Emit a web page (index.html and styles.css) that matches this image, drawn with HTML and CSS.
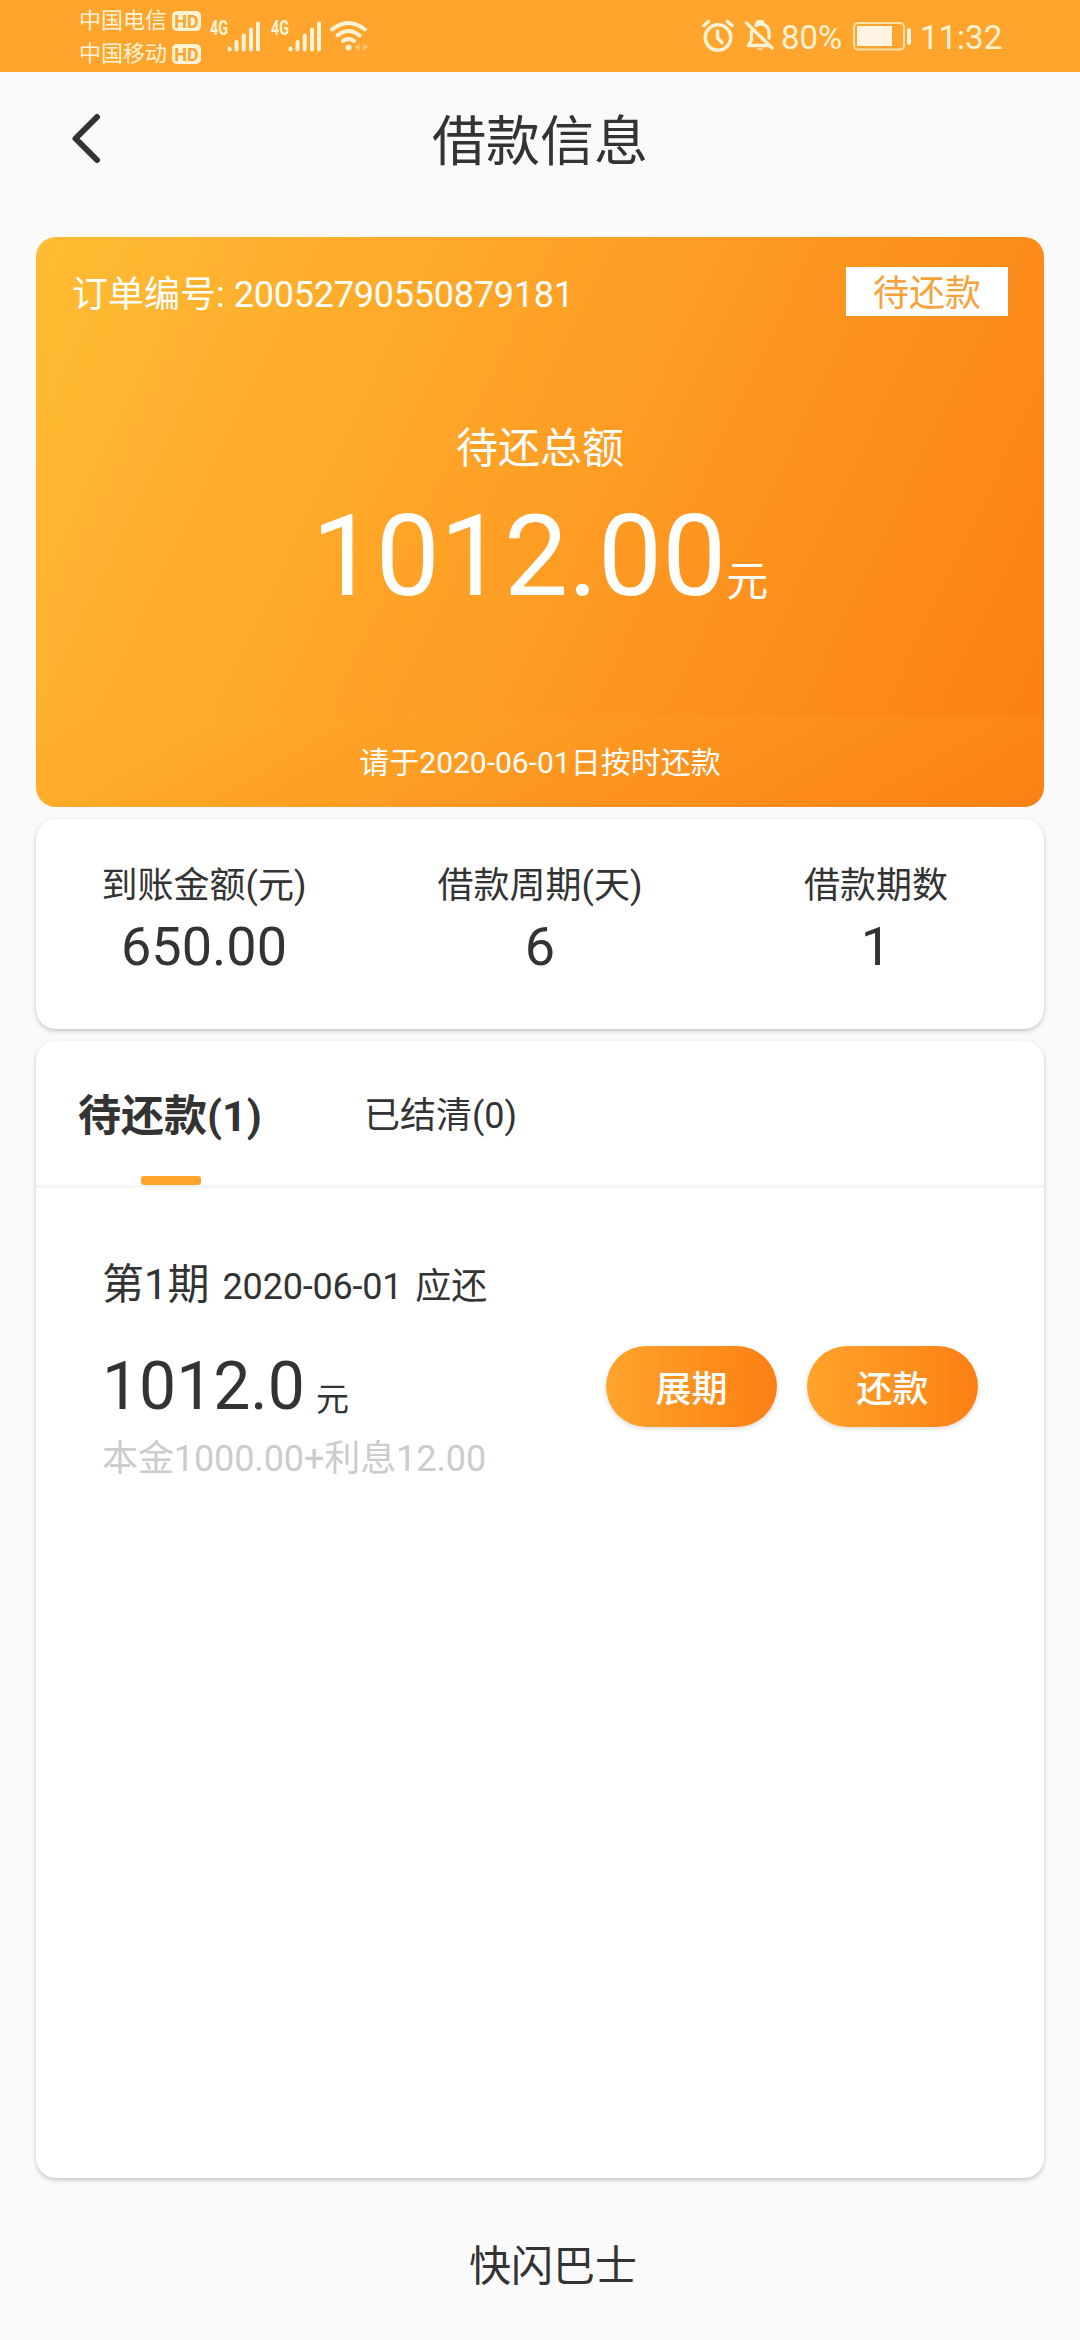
FILE: index.html
```html
<!DOCTYPE html>
<html lang="zh-CN">
<head>
<meta charset="utf-8">
<title>借款信息</title>
<link rel="stylesheet" href="styles.css">
</head>
<body>
<header class="status">
  <div class="carriers">
    <div class="carrier"><span>中国电信</span><b class="hd">HD</b></div>
    <div class="carrier"><span>中国移动</span><b class="hd">HD</b></div>
  </div>
  <svg class="signal" width="50" height="32" viewBox="0 0 50 32">
    <text x="0" y="15" class="net" textLength="18" lengthAdjust="spacingAndGlyphs">4G</text>
    <path d="M19.500 29.500V28.500M26.500 29.500V22M33.700 29.500V15.500M41 29.500V9.500M48 29.500V3.500"/>
  </svg>
  <svg class="signal second" width="50" height="32" viewBox="0 0 50 32">
    <text x="0" y="15" class="net" textLength="18" lengthAdjust="spacingAndGlyphs">4G</text>
    <path d="M19.500 29.500V28.500M26.500 29.500V22M33.700 29.500V15.500M41 29.500V9.500M48 29.500V3.500"/>
  </svg>
  <svg class="wifi" width="38" height="32" viewBox="0 0 38 32">
    <path d="M2 9.500Q18.500-3.500 35 9.500M7.500 15.500Q18.500 6.500 29.500 15.500M13 21Q18.500 17 24 21"/>
    <circle cx="18.500" cy="27.500" r="3"/>
    <path class="faint" d="M24.500 27l5-4v8zM38 27l-5-4v8z"/>
  </svg>
  <svg class="alarm" width="32" height="32" viewBox="0 0 32 32">
    <circle cx="16" cy="17.500" r="12.700"/>
    <path d="M2 5.500 6.500 1.500M30 5.500 25.500 1.500M15.500 11V18L20 22.500"/>
  </svg>
  <svg class="bell" width="30" height="32" viewBox="0 0 30 32">
    <path d="M1.500 3 27 28M12 3.500C12 .8 18 .8 18 3.500M11 5.500C18.500 1.500 24 6.500 24 13V18M6.500 11.500V20L3.500 25.500H22"/>
    <path class="solid" d="M11.500 28.500h7q-3.500 3.500-7 0z"/>
  </svg>
  <span class="percent">80%</span>
  <svg class="battery" width="59" height="29" viewBox="0 0 59 29">
    <rect class="shell" x="1" y="1" width="50" height="26.500" rx="4"/>
    <rect class="level" x="4" y="4" width="35" height="20"/>
    <rect class="level" x="54" y="6" width="4" height="17" rx="2"/>
  </svg>
  <span class="clock">11:32</span>
</header>

<nav class="titlebar">
  <svg class="back" width="30" height="50" viewBox="0 0 30 50"><path d="M25 4 3.500 25.500 25 47"/></svg>
  <h1>借款信息</h1>
</nav>

<main>
  <section class="summary">
    <div class="total">
      <div class="order"><span>订单编号: <span class="number">20052790550879181</span></span><span class="tag">待还款</span></div>
      <div class="caption">待还总额</div>
      <div class="amount">1012.00<small>元</small></div>
    </div>
    <div class="hint">请于2020-06-01日按时还款</div>
  </section>

  <section class="card stats">
    <div><p>到账金额(元)</p><strong>650.00</strong></div>
    <div><p>借款周期(天)</p><strong>6</strong></div>
    <div><p>借款期数</p><strong>1</strong></div>
  </section>

  <section class="card plan">
    <div class="tabs">
      <div class="tab active">待还款(1)</div>
      <div class="tab">已结清(0)</div>
    </div>
    <div class="item">
      <div class="term"><span>第1期</span><span class="date number">2020-06-01</span><span class="date">应还</span></div>
      <div class="due">
        <div class="money">1012.0<small>元</small></div>
        <button>展期</button>
        <button>还款</button>
      </div>
      <div class="detail">本金1000.00+利息12.00</div>
    </div>
  </section>
</main>
<footer>快闪巴士</footer>
</body>
</html>
```
FILE: styles.css
```css
* { box-sizing: border-box; margin: 0; padding: 0; }
body {
  display: flex;
  flex-direction: column;
  width: 1080px;
  height: 2340px;
  background: #fafafa;
  color: #333;
  font-family: Roboto, "Noto Sans CJK SC", sans-serif;
  overflow: hidden;
}
svg { display: block; flex: none; overflow: visible; }
.number { letter-spacing: -.22px; }

.status {
  display: flex;
  height: 72px;
  padding-left: 79px;
  background: #ffa42c;
  color: #fff3d6;
}
.status svg { fill: none; stroke: #fff3d6; stroke-linecap: round; stroke-linejoin: round; }
.carriers { padding-top: 4px; width: 131px; }
.carrier { display: flex; align-items: center; gap: 5px; height: 33px; font-size: 22px; line-height: 33px; white-space: nowrap; }
.hd {
  width: 29px;
  height: 20px;
  border-radius: 5px;
  background: #fff3d6;
  color: #ffa42c;
  font-size: 18px;
  line-height: 21px;
  text-align: center;
}
.signal { margin-top: 20px; stroke-width: 4px; }
.signal.second { margin-left: 11px; }
.status .net { fill: #fff3d6; stroke: none; font-size: 20px; font-weight: 700; }
.wifi { margin: 20px 0 0 9px; stroke-width: 4px; }
.status .wifi circle { fill: #fff3d6; stroke: none; }
.status .wifi .faint { fill: #ffc472; stroke: none; }
.alarm { margin: 20px 0 0 334px; stroke-width: 3.6px; }
.bell { margin: 20px 0 0 11px; stroke-width: 3.4px; }
.status .bell .solid { fill: #fff3d6; stroke: none; }
.percent { margin-left: 6px; width: 72px; font-size: 33px; line-height: 76px; }
.battery { margin-top: 22px; }
.status .battery .level { fill: #fff3e4; stroke: none; }
.status .battery .shell { fill: none; stroke: #ffe0a8; stroke-width: 2px; }
.clock { margin-left: 8px; font-size: 33px; line-height: 76px; }

.titlebar { display: grid; grid-template-columns: 72px 1fr 72px; height: 165px; padding-top: 35px; }
.back { margin: 6px 0 0 72px; fill: none; stroke: #333; stroke-width: 6px; stroke-linecap: round; stroke-linejoin: round; }
h1 { font-size: 54px; font-weight: 400; line-height: 72px; text-align: center; }

main { padding: 0 36px; }
.summary { height: 570px; border-radius: 20px; overflow: hidden; color: #fff; }
.total { height: 480px; padding-top: 30px; background: linear-gradient(115.5deg, #ffbc33, #fe9f25 50%, #fb8014); }
.order { display: flex; justify-content: space-between; padding: 0 36px; height: 49px; font-size: 36px; line-height: 56px; }
.tag { width: 162px; height: 49px; background: #fff; color: #f5a338; line-height: 55px; text-align: center; }
.caption { padding-top: 103px; font-size: 42px; line-height: 60px; text-align: center; }
.amount { font-size: 114px; line-height: 136px; text-align: center; margin-top: 9px; }
.amount small { position: relative; top: 1px; font-size: 42px; }
.hint { height: 90px; background: linear-gradient(150deg, #ffb12d, #fb8014); font-size: 30px; line-height: 91px; text-align: center; }

.card { background: #fff; border-radius: 20px; box-shadow: 0 2px 4px rgba(0, 0, 0, .22); margin-top: 12px; }
.stats { display: grid; grid-template-columns: repeat(3, 1fr); height: 210px; padding-top: 37px; text-align: center; }
.stats p { font-size: 36px; line-height: 60px; }
.stats strong { display: block; font-size: 54px; font-weight: 400; line-height: 61px; }

.plan { height: 1137px; }
.tabs { display: flex; gap: 100px; height: 147px; padding-left: 42px; border-bottom: 3px solid #f5f5f5; }
.tab { font-size: 36px; line-height: 150px; }
.tab.active { position: relative; width: 186px; font-size: 43px; font-weight: 700; white-space: nowrap; }
.tab.active::after { content: ""; position: absolute; left: 63px; bottom: 0; width: 60px; height: 9px; border-radius: 3px; background: #ffa42c; }
.item { padding: 67px 66px 0 66px; }
.term { display: flex; align-items: baseline; height: 60px; font-size: 42px; line-height: 60px; }
.date { margin-left: 13px; font-size: 36px; }
.due { display: flex; gap: 30px; height: 81px; margin-top: 31px; }
.money { flex: 1; font-size: 66px; line-height: 81px; }
.money small { position: relative; top: 2px; margin-left: 11px; font-size: 33px; }
button {
  width: 171px;
  height: 81px;
  border: 0;
  border-radius: 41px;
  background: linear-gradient(90deg, #ffa42c, #fc7f14);
  box-shadow: 0 2px 5px rgba(0, 0, 0, .14);
  color: #fff;
  font: 500 36px/81px Roboto, "Noto Sans CJK SC", sans-serif;
  padding-top: 4px;
}
.detail { margin-top: 2px; color: #ccc; font-size: 36px; line-height: 60px; letter-spacing: -.1px; }

footer { padding: 59px 0 0 26px; font-size: 42px; line-height: 60px; text-align: center; }
```
